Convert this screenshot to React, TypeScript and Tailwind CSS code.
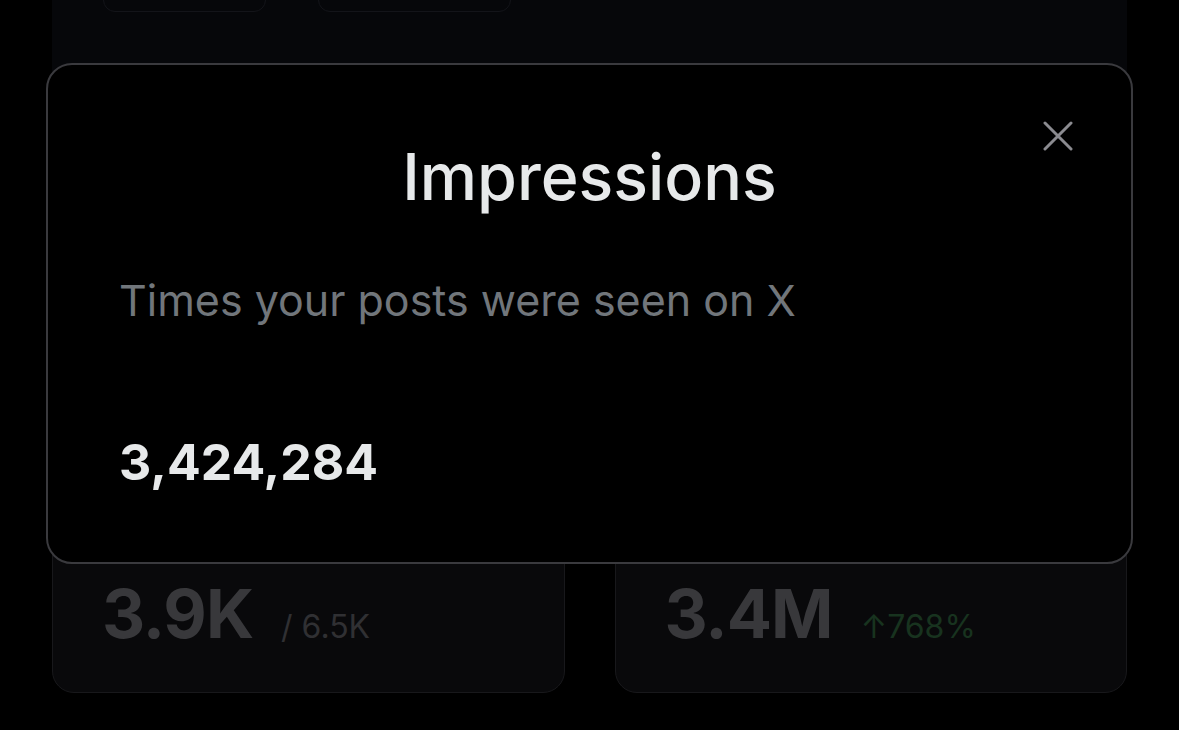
export default function App() {
  const stats = [
    { value: '3.9K', extra: '/ 6.5K', extraClass: 'text-[#303033]' },
    { value: '3.4M', extra: '↑768%', extraClass: 'text-[#18331f]' },
  ];

  return (
    <div className="relative w-full h-[730px] bg-black overflow-hidden font-['Inter',sans-serif]">
      {/* Dimmed page behind the dialog */}
      <div className="flex flex-col pl-[52px] w-[1127px]">
        <div className="h-[450px] bg-[#06070a] flex gap-[52px] pl-[51px]">
          <div className="-mt-[30px] w-[163px] h-[42px] rounded-[12px] border border-[#131419]"></div>
          <div className="-mt-[30px] w-[193px] h-[42px] rounded-[12px] border border-[#131419]"></div>
        </div>
        <div className="grid grid-cols-2 gap-[50px] mt-[20px]">
          {stats.map((stat, index) => (
            <div
              key={index}
              className="h-[223px] rounded-[22px] bg-[#09090b] border border-[#18181b] flex items-end pl-[49px] pb-[45px]"
            >
              <div className="flex items-baseline gap-[28px]">
                <span className="text-[67px] leading-none font-bold text-[#38383b] tracking-[-1px]">{stat.value}</span>
                <span className={`text-[32px] leading-none ${stat.extraClass}`}>{stat.extra}</span>
              </div>
            </div>
          ))}
        </div>
      </div>

      {/* Dialog */}
      <div className="absolute left-[46px] top-[63px] w-[1087px] h-[501px] rounded-[26px] border-2 border-[#3a3a3e] bg-black">
        <button className="absolute right-[58px] top-[56px] text-[#8b8b90]">
          <svg width="30" height="30" viewBox="0 0 30 30" fill="none" stroke="currentColor" strokeWidth="3" strokeLinecap="round">
            <path d="M2 2 L28 28 M28 2 L2 28" />
          </svg>
        </button>
        <div className="flex flex-col pt-[80px] pl-[71px]">
          <h2 className="text-[64.5px] leading-none font-medium text-[#e7e9ea] text-center pr-[71px]">Impressions</h2>
          <p className="mt-[69px] text-[43px] leading-none text-[#71767b]">Times your posts were seen on X</p>
          <div className="mt-[115px] text-[50px] leading-none font-bold text-[#e7e9ea]">3,424,284</div>
        </div>
      </div>
    </div>
  );
}
